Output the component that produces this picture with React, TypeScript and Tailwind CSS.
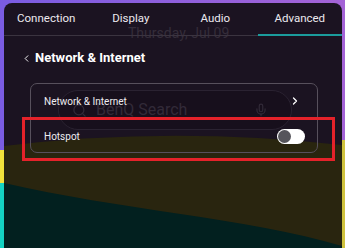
import React from "react";
import { ChevronLeft, ChevronRight, Search, Mic } from "lucide-react";

const tabs = ["Connection", "Display", "Audio", "Advanced"];

// wallpaper + the tinted panel behind the settings content
const Wallpaper: React.FC = () => (
  <div className="absolute inset-0">
    <svg width="345" height="248" viewBox="0 0 345 248" className="absolute inset-0">
      <defs>
        <linearGradient id="sky" x1="0" y1="0" x2="1" y2="0">
          <stop offset="0" stopColor="#7a5ce2" />
          <stop offset="1" stopColor="#a463d6" />
        </linearGradient>
        <clipPath id="panel">
          <rect x="4" y="3" width="338" height="260" rx="8" />
        </clipPath>
      </defs>
      <rect width="345" height="248" fill="url(#sky)" />
      <rect x="0" y="150" width="4" height="34" fill="#f1e23c" />
      <rect x="0" y="183" width="4" height="65" fill="#14d3c3" />
      <rect x="342" y="140" width="3" height="108" fill="#cfc23e" />
      <g clipPath="url(#panel)">
        <rect x="4" y="3" width="338" height="260" fill="#1b1321" />
        <path d="M4,146 Q170,126 342,145 L342,248 L4,248 Z" fill="#29250f" />
        <path d="M4,183 C120,210 250,218 345,247 L345,260 L4,260 Z" fill="#02201f" />
      </g>
    </svg>
    <div
      className="absolute left-[128px] top-[25px] text-[14px] leading-[16px] text-[#352d3a]"
      style={{ fontFamily: "Roboto, sans-serif" }}
    >
      Thursday, Jul 09
    </div>
    <div className="absolute left-[58px] top-[90px] w-[234px] h-[40px] rounded-full border border-[#2a2231] bg-[#170f1c] flex items-center px-[13px] text-[#322a38]">
      <Search className="w-[15px] h-[15px]" strokeWidth={2} />
      <span className="ml-[9px] text-[16px]" style={{ fontFamily: "Roboto, sans-serif" }}>
        BenQ Search
      </span>
      <Mic className="w-[14px] h-[14px] ml-auto mr-[10px]" strokeWidth={2} />
    </div>
  </div>
);

export default function App() {
  return (
    <div
      className="relative w-[345px] h-[248px] overflow-hidden"
      style={{ fontFamily: "Roboto, 'Liberation Sans', sans-serif" }}
    >
      <Wallpaper />
      <div className="relative ml-[4px] mt-[3px] w-[338px]">
        <div className="grid grid-cols-4 h-[31px] items-center text-[11.5px] text-[#ece9ef]">
          {tabs.map((t) => (
            <div key={t} className="text-center pt-[1px]">
              {t}
            </div>
          ))}
        </div>
        <div className="grid grid-cols-4 h-[2px] items-center">
          <div className="col-span-3 h-px bg-[#3b3440]" />
          <div className="h-[2px] bg-[#1b9c9c]" />
        </div>

        <div className="flex items-center ml-[17px] mt-[14px] h-[16px] text-white">
          <ChevronLeft className="w-[11px] h-[11px]" strokeWidth={2} />
          <span className="ml-[3px] text-[13px] font-bold">Network &amp; Internet</span>
        </div>

        <div className="ml-[26px] mt-[17px] w-[288px] rounded-[7px] border border-[#57505c] text-[10px] text-[#eeecf0]">
          <div className="h-[34px] flex items-center pl-[13px] pr-[16px]">
            <span>Network &amp; Internet</span>
            <ChevronRight className="ml-auto w-[12px] h-[12px] text-white" strokeWidth={2.5} />
          </div>
          <div className="h-[34px] flex items-center pl-[13px] pr-[12px] pt-[3px]">
            <span>Hotspot</span>
            <div className="ml-auto w-[28px] h-[15px] rounded-full bg-white flex items-center px-[1px]">
              <div className="w-[13px] h-[13px] rounded-full bg-[#56555b]" />
            </div>
          </div>
        </div>
      </div>
      <div className="absolute left-[22px] top-[117px] w-[313px] h-[44px] border-[3px] border-[#e5222a]" />
    </div>
  );
}
